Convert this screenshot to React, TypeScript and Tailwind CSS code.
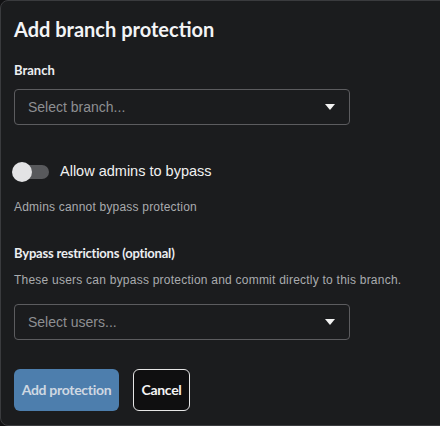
import { useState } from 'react';

const SelectBox = ({ placeholder }: { placeholder: string }) => (
  <button className="flex h-9 w-[336px] items-center justify-between rounded border border-[#5c5c5f] bg-transparent pl-[13px] pr-[13px] text-left">
    <span className="font-['Liberation_Sans',Arial,sans-serif] text-[14px] text-[#8e8f92]">{placeholder}</span>
    <svg width="10" height="6" viewBox="0 0 10 6" className="mr-[1px]">
      <path d="M0 0h10L5 6z" fill="#f2f2f2" />
    </svg>
  </button>
);

const App = () => {
  const [allowAdmins, setAllowAdmins] = useState(false);

  return (
    <div className="h-[426px] w-[440px] overflow-hidden bg-[#111113]">
      <div className="flex w-[470px] flex-col rounded-lg border border-[#3a3b3e] bg-[#1b1c1e] px-[13px] pb-[14px] pt-[14px] font-['Lato',sans-serif]">
        <h2 className="text-[20px] font-bold leading-7 text-[#f3f4f6]">Add branch protection</h2>

        <label className="mt-[18px] text-[13px] font-bold leading-[18px] text-[#eceef1]">Branch</label>
        <div className="mt-[10px]">
          <SelectBox placeholder="Select branch..." />
        </div>

        <div className="mt-[37px] flex h-5 items-center gap-[11px]">
          <button
            onClick={() => setAllowAdmins((prev) => !prev)}
            className="relative h-5 w-[37px] -ml-[2px]"
          >
            <span className="absolute left-[6px] top-[3px] h-[14px] w-[31px] rounded-full bg-[#58595c]" />
            <span
              className={`absolute top-0 h-5 w-5 rounded-full bg-[#e3e3e5] ${allowAdmins ? 'left-[17px]' : 'left-0'}`}
            />
          </button>
          <span className="font-['Liberation_Sans',Arial,sans-serif] text-[14.5px] text-[#f1f1f1]">Allow admins to bypass</span>
        </div>

        <p className="mt-[17px] font-['Liberation_Sans',Arial,sans-serif] text-[12px] leading-4 tracking-[0.2px] text-[#a9abae]">
          {allowAdmins ? 'Admins can bypass protection' : 'Admins cannot bypass protection'}
        </p>

        <label className="mt-[29px] text-[13px] font-bold leading-[18px] tracking-[-0.2px] text-[#eceef1]">
          Bypass restrictions (optional)
        </label>
        <p className="mt-[10px] font-['Liberation_Sans',Arial,sans-serif] text-[12px] leading-4 tracking-[0.23px] text-[#a9abae]">
          These users can bypass protection and commit directly to this branch.
        </p>
        <div className="mt-4">
          <SelectBox placeholder="Select users..." />
        </div>

        <div className="mt-[29px] flex gap-[14px]">
          <button className="h-[42px] w-[105px] rounded-md bg-[#4d7ead] pb-[2px] text-[14px] font-bold tracking-[-0.3px] text-[#cfd8e2]">
            Add protection
          </button>
          <button className="h-[42px] w-[57px] rounded-md border border-[#e6e6e6] bg-[#0f0f10] pb-[2px] text-[14px] font-bold tracking-[-0.3px] text-[#f4f4f4]">
            Cancel
          </button>
        </div>
      </div>
    </div>
  );
};

export default App;
